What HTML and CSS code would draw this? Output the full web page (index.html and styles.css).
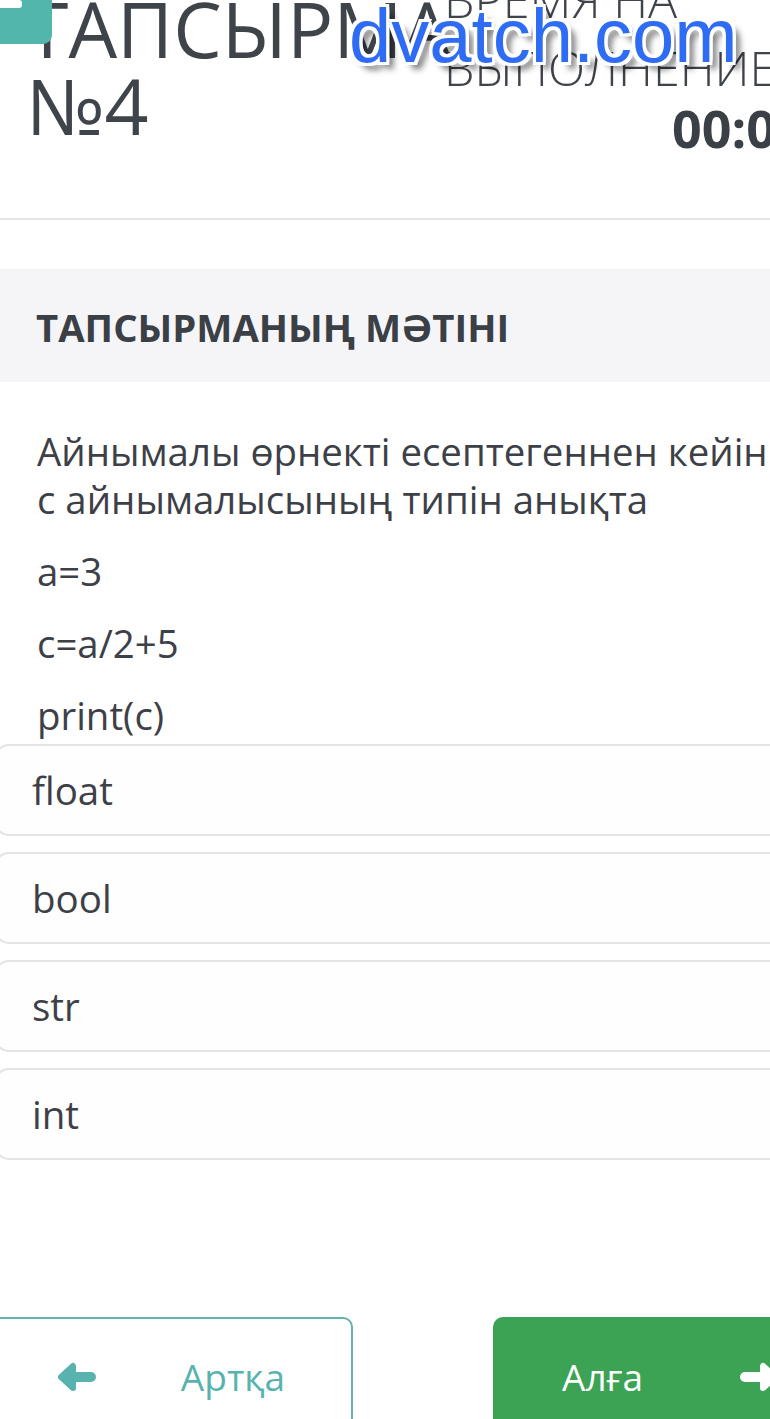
FILE: index.html
```html
<!DOCTYPE html>
<html lang="kk">
<head>
<meta charset="utf-8">
<title>Тапсырма №4</title>
<link rel="stylesheet" href="styles.css">
</head>
<body>
<div class="screen">
  <header class="task-header">
    <h1 class="task-title">ТАПСЫРМА<br>№4</h1>
    <div class="timer">
      <div class="timer-label">ВРЕМЯ НА<br>ВЫПОЛНЕНИЕ</div>
      <div class="timer-value">00:09:41</div>
    </div>
  </header>

  <section class="task-band">
    <h2 class="task-band-title">ТАПСЫРМАНЫҢ МӘТІНІ</h2>
  </section>

  <div class="question">
    <p>Айнымалы өрнекті есептегеннен кейін с айнымалысының типін анықта</p>
    <p>a=3</p>
    <p>c=a/2+5</p>
    <p>print(c)</p>
  </div>

  <ul class="options">
    <li class="option">float</li>
    <li class="option">bool</li>
    <li class="option">str</li>
    <li class="option">int</li>
  </ul>

  <nav class="nav-buttons">
    <button class="nav-btn nav-back">
      <svg class="nav-icon" viewBox="0 0 38 30" width="38" height="30" aria-hidden="true">
        <polygon points="3,15 15,4 15,26" fill="currentColor" stroke="currentColor" stroke-width="6" stroke-linejoin="round"/>
        <line x1="8" y1="15" x2="33" y2="15" stroke="currentColor" stroke-width="10" stroke-linecap="round"/>
      </svg>
      <span>Артқа</span>
    </button>
    <button class="nav-btn nav-next">
      <span>Алға</span>
      <svg class="nav-icon" viewBox="0 0 38 30" width="38" height="30" aria-hidden="true">
        <polygon points="35,15 23,4 23,26" fill="currentColor" stroke="currentColor" stroke-width="6" stroke-linejoin="round"/>
        <line x1="5" y1="15" x2="30" y2="15" stroke="currentColor" stroke-width="10" stroke-linecap="round"/>
      </svg>
    </button>
  </nav>
</div>

<button class="menu-btn" aria-label="Menu"><span class="menu-line"></span></button>
<div class="watermark">dvatch.com</div>
</body>
</html>
```

FILE: styles.css
```css
html, body {
  margin: 0;
  padding: 0;
  background: #ffffff;
}

body {
  width: 770px;
  height: 1419px;
  overflow: hidden;
  position: relative;
  font-family: "Open Sans", "Noto Sans", sans-serif;
  color: #3d4047;
}

.screen {
  width: 900px;
  display: flex;
  flex-direction: column;
}

/* header */
.task-header {
  display: flex;
  align-items: flex-start;
  margin-top: -35px;
  height: 253px;
  border-bottom: 2px solid #e6e6e8;
}

.task-title {
  margin: 25px 0 0 26px;
  width: 418px;
  flex: none;
  font-size: 77px;
  line-height: 77px;
  font-weight: 400;
  white-space: nowrap;
  color: #3f434a;
}

.timer {
  width: 440px;
  flex: none;
}

.timer-label {
  font-size: 48.5px;
  line-height: 68px;
  font-weight: 300;
  white-space: nowrap;
  color: #3f434a;
}

.timer-value {
  padding-left: 228px;
  font-size: 52px;
  line-height: 54px;
  font-weight: 700;
  white-space: nowrap;
  color: #3b3f46;
}

/* section title band */
.task-band {
  margin-top: 49px;
  background: #f5f5f8;
  padding: 32px 0 29px 36px;
}

.task-band-title {
  margin: 0;
  font-size: 38.3px;
  line-height: 52px;
  font-weight: 700;
  color: #3b3f46;
}

/* question */
.question {
  margin-top: 45px;
  padding-left: 37px;
  width: 745px;
  font-size: 38.4px;
  line-height: 48px;
}

.question p {
  margin: 0;
}

.question p + p {
  margin-top: 24px;
}

/* options */
.options {
  list-style: none;
  margin: 5px 0 0 -4px;
  padding: 0;
  display: flex;
  flex-direction: column;
  gap: 16px;
}

.option {
  border: 2px solid #e4e4e6;
  border-radius: 12px;
  background: #fefefe;
  padding: 20px 34px;
  font-size: 38.5px;
  line-height: 48px;
  color: #3d4047;
}

/* navigation */
.nav-buttons {
  display: flex;
  gap: 140px;
  margin: 157px 0 0 -10px;
}

.nav-btn {
  box-sizing: border-box;
  width: 363px;
  height: 120px;
  border-radius: 10px;
  display: flex;
  align-items: center;
  justify-content: space-between;
  font-family: "Open Sans", "Noto Sans", sans-serif;
  font-size: 37px;
  line-height: 48px;
  cursor: pointer;
}

.nav-back {
  background: #ffffff;
  border: 2px solid #5fb3b0;
  color: #58b3ae;
  padding: 0 66px 0 66px;
}

.nav-next {
  background: #3ca355;
  border: 2px solid #3ca355;
  color: #ffffff;
  padding: 0 76px 0 67px;
}

.nav-icon {
  display: block;
  flex: none;
}

/* overlays */
.menu-btn {
  position: absolute;
  top: 0;
  left: 0;
  width: 52px;
  height: 44px;
  padding: 0;
  border: none;
  background: #52b6ad;
  border-radius: 0 0 9px 0;
  display: flex;
  align-items: flex-start;
}

.menu-line {
  display: block;
  width: 22px;
  height: 8px;
  background: #ffffff;
  border-radius: 0 3px 3px 0;
}

.watermark {
  position: absolute;
  top: -2px;
  left: 349px;
  font-family: "Liberation Sans", Arial, sans-serif;
  font-size: 76px;
  line-height: 75px;
  color: #2e6cf4;
  white-space: nowrap;
  text-shadow:
    -3px -3px 0 #fff, 3px -3px 0 #fff, -3px 3px 0 #fff, 3px 3px 0 #fff,
    0 -3px 0 #fff, 0 3px 0 #fff, -3px 0 0 #fff, 3px 0 0 #fff,
    7px 7px 6px rgba(0, 0, 0, 0.55);
}
```
